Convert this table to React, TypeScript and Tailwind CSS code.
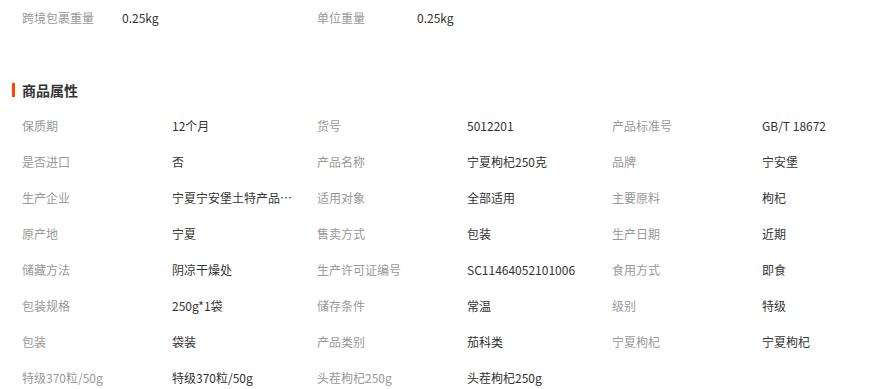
const top = [
  ['跨境包裹重量', '0.25kg'],
  ['单位重量', '0.25kg'],
]

const attrs: [string, string][] = [
  ['保质期', '12个月'],
  ['货号', '5012201'],
  ['产品标准号', 'GB/T 18672'],
  ['是否进口', '否'],
  ['产品名称', '宁夏枸杞250克'],
  ['品牌', '宁安堡'],
  ['生产企业', '宁夏宁安堡土特产品有限公司'],
  ['适用对象', '全部适用'],
  ['主要原料', '枸杞'],
  ['原产地', '宁夏'],
  ['售卖方式', '包装'],
  ['生产日期', '近期'],
  ['储藏方法', '阴凉干燥处'],
  ['生产许可证编号', 'SC11464052101006'],
  ['食用方式', '即食'],
  ['包装规格', '250g*1袋'],
  ['储存条件', '常温'],
  ['级别', '特级'],
  ['包装', '袋装'],
  ['产品类别', '茄科类'],
  ['宁夏枸杞', '宁夏枸杞'],
  ['特级370粒/50g', '特级370粒/50g'],
  ['头茬枸杞250g', '头茬枸杞250g'],
]

export default function App() {
  return (
    <div
      className="w-[889px] h-[389px] overflow-hidden bg-white text-xs"
      style={{ fontFamily: '"Noto Sans CJK SC", "Noto Sans", sans-serif' }}
    >
      <div className="flex pl-[22px]">
        {top.map(([k, v]) => (
          <div key={k} className="flex w-[295px] h-9 items-center">
            <span className="w-[100px] text-[#999]">{k}</span>
            <span className="text-[#333]">{v}</span>
          </div>
        ))}
      </div>

      <div className="mt-[44px] mb-[8px] flex items-center h-5 pl-[12px]">
        <span className="w-[3px] h-[14px] bg-[#ff4400] mr-[7px]" />
        <h3 className="text-sm font-bold text-[#333]">商品属性</h3>
      </div>

      <div className="grid grid-cols-[295px_295px_295px] pl-[22px]">
        {attrs.map(([k, v], i) => (
          <div key={i} className="flex h-9 items-center">
            <span className="w-[150px] shrink-0 text-[#999] truncate">{k}</span>
            <span className="max-w-[124px] text-[#333] truncate">{v}</span>
          </div>
        ))}
      </div>
    </div>
  )
}
